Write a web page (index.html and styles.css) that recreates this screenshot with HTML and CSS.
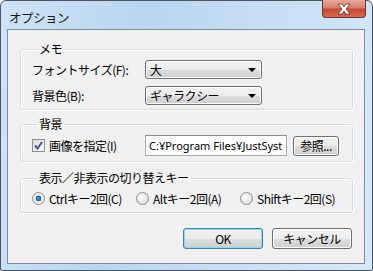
FILE: index.html
```html
<!DOCTYPE html>
<html lang="ja">
<head>
    <meta charset="UTF-8">
    <title>オプション</title>
    <link rel="stylesheet" href="styles.css">
</head>
<body>

    <div class="window">
        <div class="titlebar">
            <span class="title">オプション</span>
            <span class="close">
                <svg width="16" height="12" viewBox="0 0 16 12">
                    <path d="M2 1 L6 1 L8 4 L10 1 L14 1 L10 6 L14 11 L10 11 L8 8 L6 11 L2 11 L6 6 Z" fill="#fff" stroke="#6b2a22" stroke-width="0.8"/>
                </svg>
            </span>
        </div>

        <div class="client">
            <!-- メモ -->
            <fieldset class="group memo">
                <legend>メモ</legend>
                <div class="row">
                    <span class="lbl">フォントサイズ(F):</span>
                    <div class="combo"><span>大</span><i class="arrow"></i></div>
                </div>
                <div class="row">
                    <span class="lbl">背景色(B):</span>
                    <div class="combo"><span>ギャラクシー</span><i class="arrow"></i></div>
                </div>
            </fieldset>

            <!-- 背景 -->
            <fieldset class="group bg">
                <legend>背景</legend>
                <div class="row">
                    <span class="lbl check-lbl">
                        <span class="checkbox">
                            <svg width="9" height="9" viewBox="0 0 9 9">
                                <path d="M1 4.5 L3.5 7.5 L8 1" fill="none" stroke="#3c5a9a" stroke-width="2"/>
                            </svg>
                        </span>
                        画像を指定(I)
                    </span>
                    <div class="textbox">C:¥Program Files¥JustSyst</div>
                    <span class="btn small">参照...</span>
                </div>
            </fieldset>

            <!-- 表示／非表示 -->
            <fieldset class="group">
                <legend>表示／非表示の切り替えキー</legend>
                <div class="radios">
                    <span class="radio-item"><span class="radio on"></span>Ctrlキー2回(C)</span>
                    <span class="radio-item"><span class="radio"></span>Altキー2回(A)</span>
                    <span class="radio-item"><span class="radio"></span>Shiftキー2回(S)</span>
                </div>
            </fieldset>

            <div class="buttons">
                <span class="btn default">OK</span>
                <span class="btn">キャンセル</span>
            </div>
        </div>
    </div>

</body>
</html>
```

FILE: styles.css
```css
body {
    margin: 0;
    font-family: "Noto Sans CJK JP", "Noto Sans", sans-serif;
    font-size: 12px;
    letter-spacing: -0.5px;
    color: #000;
    background: #fff;
}

.window {
    width: 373px;
    height: 271px;
    box-sizing: border-box;
    border: 1px solid #4b5560;
    border-radius: 6px 6px 2px 2px;
    background: linear-gradient(100deg, #cfe3f6 0%, #b9d5f0 35%, #c6ddf4 60%, #d7e8f8 100%);
    padding: 0 7px 6px 6px;
    display: flex;
    flex-direction: column;
}

.titlebar {
    height: 28px;
    display: flex;
    align-items: flex-start;
    justify-content: space-between;
    flex-shrink: 0;
}

.title {
    margin-top: 7px;
    margin-left: 2px;
    font-size: 12.5px;
    color: #1a1a1a;
}

.close {
    width: 44px;
    height: 18px;
    margin-top: -1px;
    margin-right: -1px;
    box-sizing: border-box;
    border: 1px solid #6a3b34;
    border-top: none;
    border-radius: 0 0 4px 4px;
    background: linear-gradient(#e9a89a 0%, #d9806f 45%, #c64a36 55%, #d86a52 100%);
    display: flex;
    align-items: center;
    justify-content: center;
}

.client {
    flex: 1;
    background: #f0f0f0;
    border: 1px solid #7f8c99;
    padding: 11px 11px 0 12px;
    display: flex;
    flex-direction: column;
}

.group {
    margin: 0 0 6px 0;
    padding: 0 10px 5px 11px;
    border: 1px solid #d5dfe5;
    border-radius: 3px;
    box-shadow: inset 1px 1px 0 #fff, 1px 1px 0 #fff;
}

.group.memo {
    padding-bottom: 4px;
}

.group.bg {
    margin-bottom: 8px;
}

.group legend {
    padding: 0 2px;
    margin-left: 5px;
    line-height: 16px;
}

.row {
    display: flex;
    align-items: center;
    margin-top: 3px;
}

.row + .row {
    margin-top: 7px;
}

.lbl {
    width: 113px;
    flex-shrink: 0;
}

.combo {
    width: 117px;
    height: 19px;
    box-sizing: border-box;
    border: 1px solid #707070;
    border-radius: 3px;
    background: linear-gradient(#f2f2f2 0%, #ebebeb 50%, #dddddd 51%, #cfcfcf 100%);
    box-shadow: inset 0 0 0 1px #fcfcfc;
    display: flex;
    align-items: center;
    justify-content: space-between;
    padding: 0 5px 0 4px;
}

.arrow {
    width: 0;
    height: 0;
    border-left: 4px solid transparent;
    border-right: 4px solid transparent;
    border-top: 4px solid #000;
}

.check-lbl {
    display: flex;
    align-items: center;
    gap: 4px;
}

.checkbox {
    width: 13px;
    height: 13px;
    box-sizing: border-box;
    border: 1px solid #8e8f8f;
    background: linear-gradient(135deg, #dcdcdc, #fafafa);
    display: flex;
    align-items: center;
    justify-content: center;
}

.textbox {
    width: 142px;
    height: 21px;
    box-sizing: border-box;
    border: 1px solid #abadb3;
    border-top-color: #8e8f8f;
    background: #fff;
    padding: 2px 3px;
    white-space: nowrap;
    overflow: hidden;
    line-height: 15px;
    font-family: "Noto Sans", sans-serif;
    font-size: 11px;
    letter-spacing: 0;
}

.btn {
    display: inline-flex;
    align-items: center;
    justify-content: center;
    box-sizing: border-box;
    border: 1px solid #707070;
    border-radius: 3px;
    background: linear-gradient(#f2f2f2 0%, #ebebeb 50%, #dddddd 51%, #cfcfcf 100%);
    box-shadow: inset 0 0 0 1px #fcfcfc;
    height: 21px;
}

.btn.small {
    width: 46px;
    height: 20px;
    margin-left: 6px;
}

.radios {
    display: flex;
    align-items: center;
    height: 18px;
    margin-top: 3px;
}

.radio-item {
    display: flex;
    align-items: center;
    gap: 4px;
    white-space: nowrap;
    flex-shrink: 0;
    width: 104px;
}

.radio-item:last-child {
    width: auto;
}

.radio {
    width: 11px;
    height: 11px;
    flex-shrink: 0;
    border-radius: 50%;
    border: 1px solid #8e8f8f;
    background: radial-gradient(circle at 40% 40%, #fdfdfd, #d4d4d4);
}

.radio.on {
    background: radial-gradient(circle, #3aa0e0 0%, #1a5a9a 35%, #f4f4f4 40%, #d4d4d4 100%);
}

.buttons {
    display: flex;
    justify-content: flex-end;
    gap: 9px;
    margin-top: 9px;
    padding-right: 1px;
}

.buttons .btn {
    width: 80px;
}

.btn.default {
    border-color: #3c7fb1;
    box-shadow: inset 0 0 0 1px #94d6f6;
}
```
